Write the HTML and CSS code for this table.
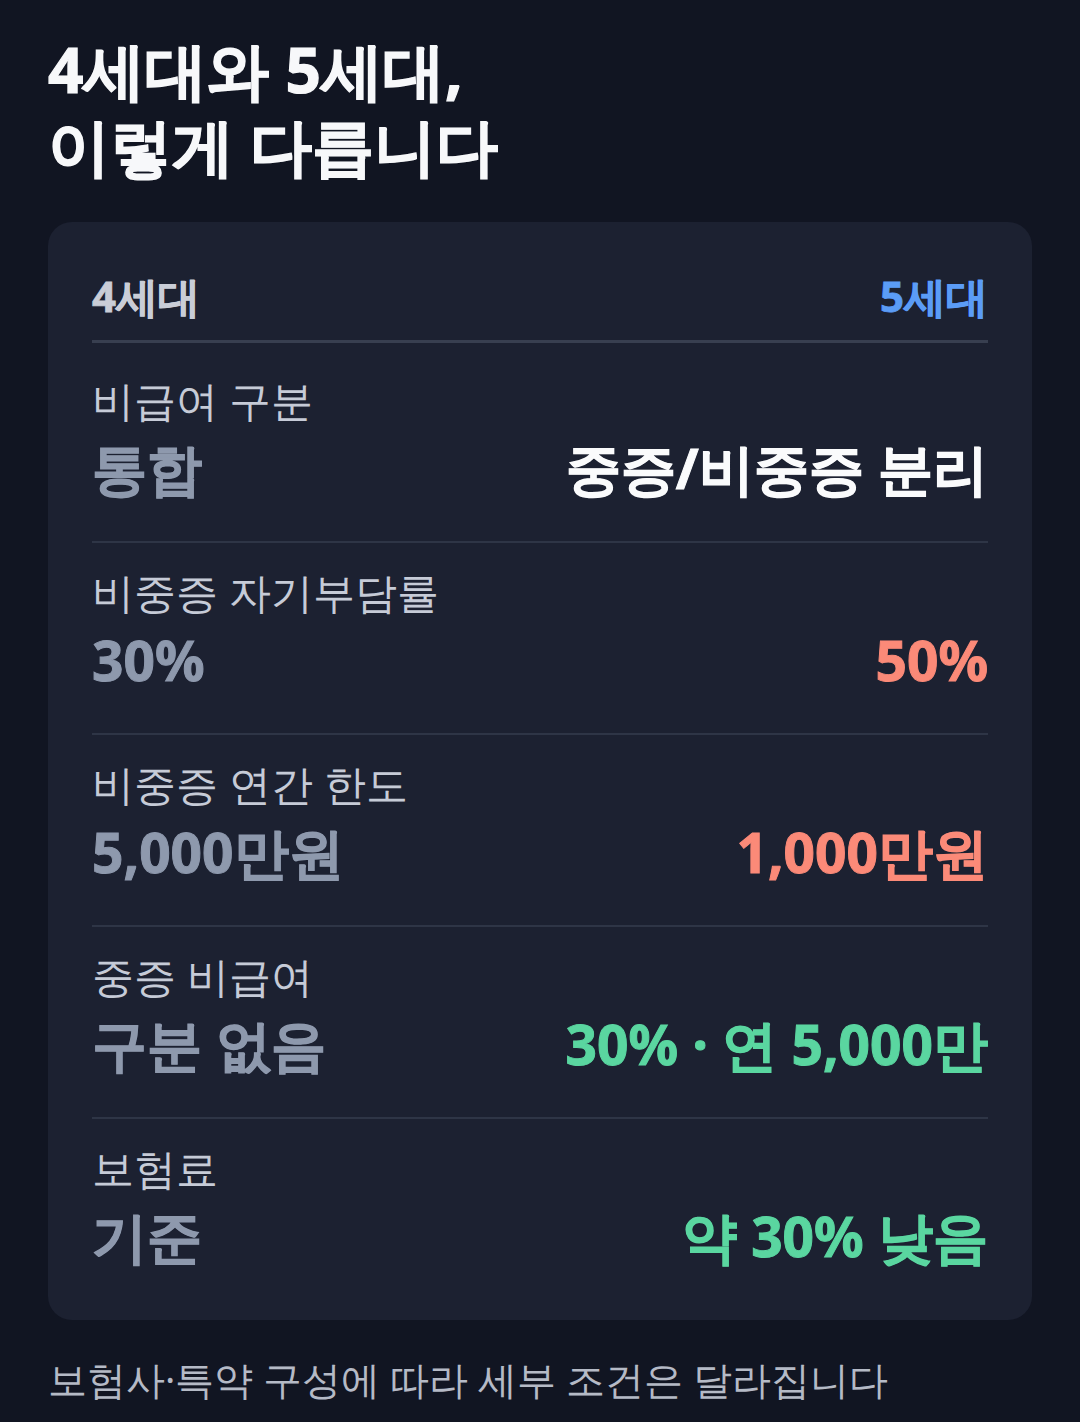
FILE: index.html
```html
<!DOCTYPE html>
<html>
<head>
  <meta charset="UTF-8">
  <meta name="viewport" content="width=device-width, initial-scale=1.0">
  <title>4세대와 5세대 비교</title>
  <link rel="stylesheet" href="styles.css">
</head>
<body>
  <h1 class="title">4세대와 5세대,<br>이렇게 다릅니다</h1>

  <div class="card">
    <div class="card-head">
      <span class="gen-old">4세대</span>
      <span class="gen-new">5세대</span>
    </div>

    <div class="row">
      <div class="label">비급여 구분</div>
      <div class="values">
        <span class="old">통합</span>
        <span class="new white">중증/비중증 분리</span>
      </div>
    </div>

    <div class="row">
      <div class="label">비중증 자기부담률</div>
      <div class="values">
        <span class="old">30%</span>
        <span class="new red">50%</span>
      </div>
    </div>

    <div class="row">
      <div class="label">비중증 연간 한도</div>
      <div class="values">
        <span class="old">5,000만원</span>
        <span class="new red">1,000만원</span>
      </div>
    </div>

    <div class="row">
      <div class="label">중증 비급여</div>
      <div class="values">
        <span class="old">구분 없음</span>
        <span class="new green">30% · 연 5,000만</span>
      </div>
    </div>

    <div class="row">
      <div class="label">보험료</div>
      <div class="values">
        <span class="old">기준</span>
        <span class="new green">약 30% 낮음</span>
      </div>
    </div>
  </div>

  <p class="note">보험사·특약 구성에 따라 세부 조건은 달라집니다</p>
</body>
</html>
```

FILE: styles.css
```css
body {
  margin: 0;
  padding: 31px 48px 0;
  background-color: #111522;
  font-family: "Noto Sans", sans-serif;
  color: #fff;
}
.title {
  margin: 0 0 39px;
  font-size: 62px;
  line-height: 76px;
  font-weight: 700;
  color: #f7f8fa;
  -webkit-text-stroke: 1.2px currentColor;
}
.card {
  background-color: #1c2131;
  border-radius: 24px;
  padding: 44px 44px 11px;
}
.card-head {
  display: flex;
  justify-content: space-between;
  font-size: 42px;
  line-height: 59px;
  font-weight: 700;
  padding-bottom: 15px;
  border-bottom: 3px solid #383f50;
  margin-bottom: 8px;
  -webkit-text-stroke: 0.8px currentColor;
}
.gen-old {
  color: #c9cdd7;
}
.gen-new {
  color: #5b9cf6;
}
.row {
  padding: 21px 0 38px;
  border-bottom: 2px solid #2e3546;
}
.row:last-child {
  border-bottom: none;
}
.label {
  font-size: 42px;
  line-height: 56px;
  color: #c6cbd7;
  margin-bottom: 5px;
}
.values {
  display: flex;
  justify-content: space-between;
  font-size: 55px;
  line-height: 70px;
  font-weight: 700;
  -webkit-text-stroke: 1px currentColor;
}
.old {
  color: #8e99ad;
}
.white {
  color: #fafbfc;
}
.red {
  color: #fb8a78;
}
.green {
  color: #5ad6a0;
}
.note {
  margin: 33px 0 0;
  font-size: 38.6px;
  line-height: 53px;
  color: #b5bac6;
}
```
